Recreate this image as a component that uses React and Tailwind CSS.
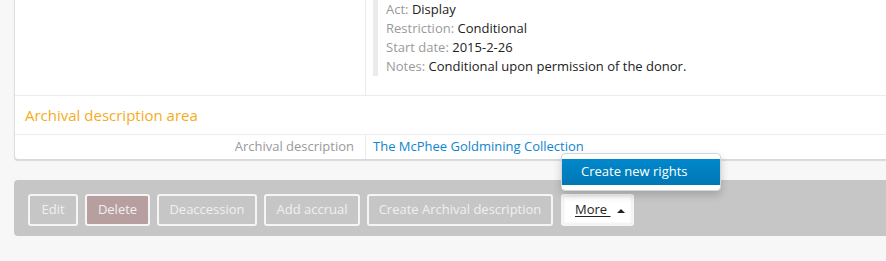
import React from 'react';

const font = { fontFamily: '"Open Sans", "Liberation Sans", sans-serif' };

// Rights entry shown in the right column
const rights = [
  ['Act', 'Display'],
  ['Restriction', 'Conditional'],
  ['Start date', '2015-2-26'],
  ['Notes', 'Conditional upon permission of the donor.'],
];

const actions = [
  { label: 'Edit', w: 'w-[50px]' },
  { label: 'Delete', w: 'w-[65px]', danger: true },
  { label: 'Deaccession', w: 'w-[100px]' },
  { label: 'Add accrual', w: 'w-[96px]' },
  { label: 'Create Archival description', w: 'w-[186px]' },
];

export default function App() {
  return (
    <div
      className="h-[261px] w-[886px] overflow-hidden bg-[#f7f7f7] text-[13px]"
      style={font}
    >
      {/* Record panel */}
      <div className="ml-[14px] rounded-bl-[4px] border-l border-[#dedede] bg-white shadow-[0_2px_1px_rgba(0,0,0,0.12)]">
        <div className="flex border-b border-[#ececec]">
          <div className="w-[351px] shrink-0 border-r border-[#ececec]" />
          <div className="flex-1 pb-[19px] pl-[7px]">
            <div className="border-l-[5px] border-[#ebebeb] pl-[8px] leading-[19px]">
              {rights.map(([k, v]) => (
                <div key={k}>
                  <span className="text-[#9a9a9a]">{k}:</span>{' '}
                  <span className="text-[#222]">{v}</span>
                </div>
              ))}
            </div>
          </div>
        </div>

        <div className="flex h-[39px] items-center border-b border-[#ececec] pl-[10px] text-[15px] text-[#f7ab1c]">
          Archival description area
        </div>

        <div className="flex h-[24px] items-center">
          <div className="flex h-full w-[351px] shrink-0 items-center justify-end border-r border-[#ececec] pr-[11px] text-[#9a9a9a]">
            Archival description
          </div>
          <a className="pl-[7px] text-[#1185cc]">The McPhee Goldmining Collection</a>
        </div>
      </div>

      {/* Action bar */}
      <div className="mt-[21px] ml-[14px] flex h-[56px] items-start gap-[7px] rounded-l-[4px] bg-[#c6c6c6] pl-[14px] pt-[14px]">
        {actions.map((a) => (
          <button
            key={a.label}
            className={`${a.w} flex h-[32px] items-center justify-center rounded-[3px] border-2 border-[#f5f5f5] text-[#f0f0f0] ${
              a.danger ? 'bg-[#b89f9f]' : 'bg-[#c6c6c6]'
            }`}
          >
            {a.label}
          </button>
        ))}

        <div className="relative ml-px">
          <button className="flex h-[32px] w-[73px] items-center rounded-[3px] border-2 border-[#f5f5f5] bg-white pl-[12px] text-[#222] shadow-[inset_0_0_3px_rgba(0,0,0,0.12)]">
            <span className="underline underline-offset-2">More&nbsp;</span>
            <svg className="ml-[6px] h-[5px] w-[8px]" viewBox="0 0 8 5">
              <path d="M0 5 L4 1 L8 5 Z" fill="#222" />
            </svg>
          </button>

          {/* Open dropdown */}
          <div className="absolute bottom-[35px] left-0 w-[160px] rounded-[4px] border border-[#d6d6d6] bg-white py-[5px] shadow-[0_4px_8px_rgba(0,0,0,0.18)]">
            <div className="flex h-[26px] items-center bg-gradient-to-b from-[#0088cc] to-[#0077b3] pl-[19px] text-white">
              Create new rights
            </div>
          </div>
        </div>
      </div>
    </div>
  );
}
